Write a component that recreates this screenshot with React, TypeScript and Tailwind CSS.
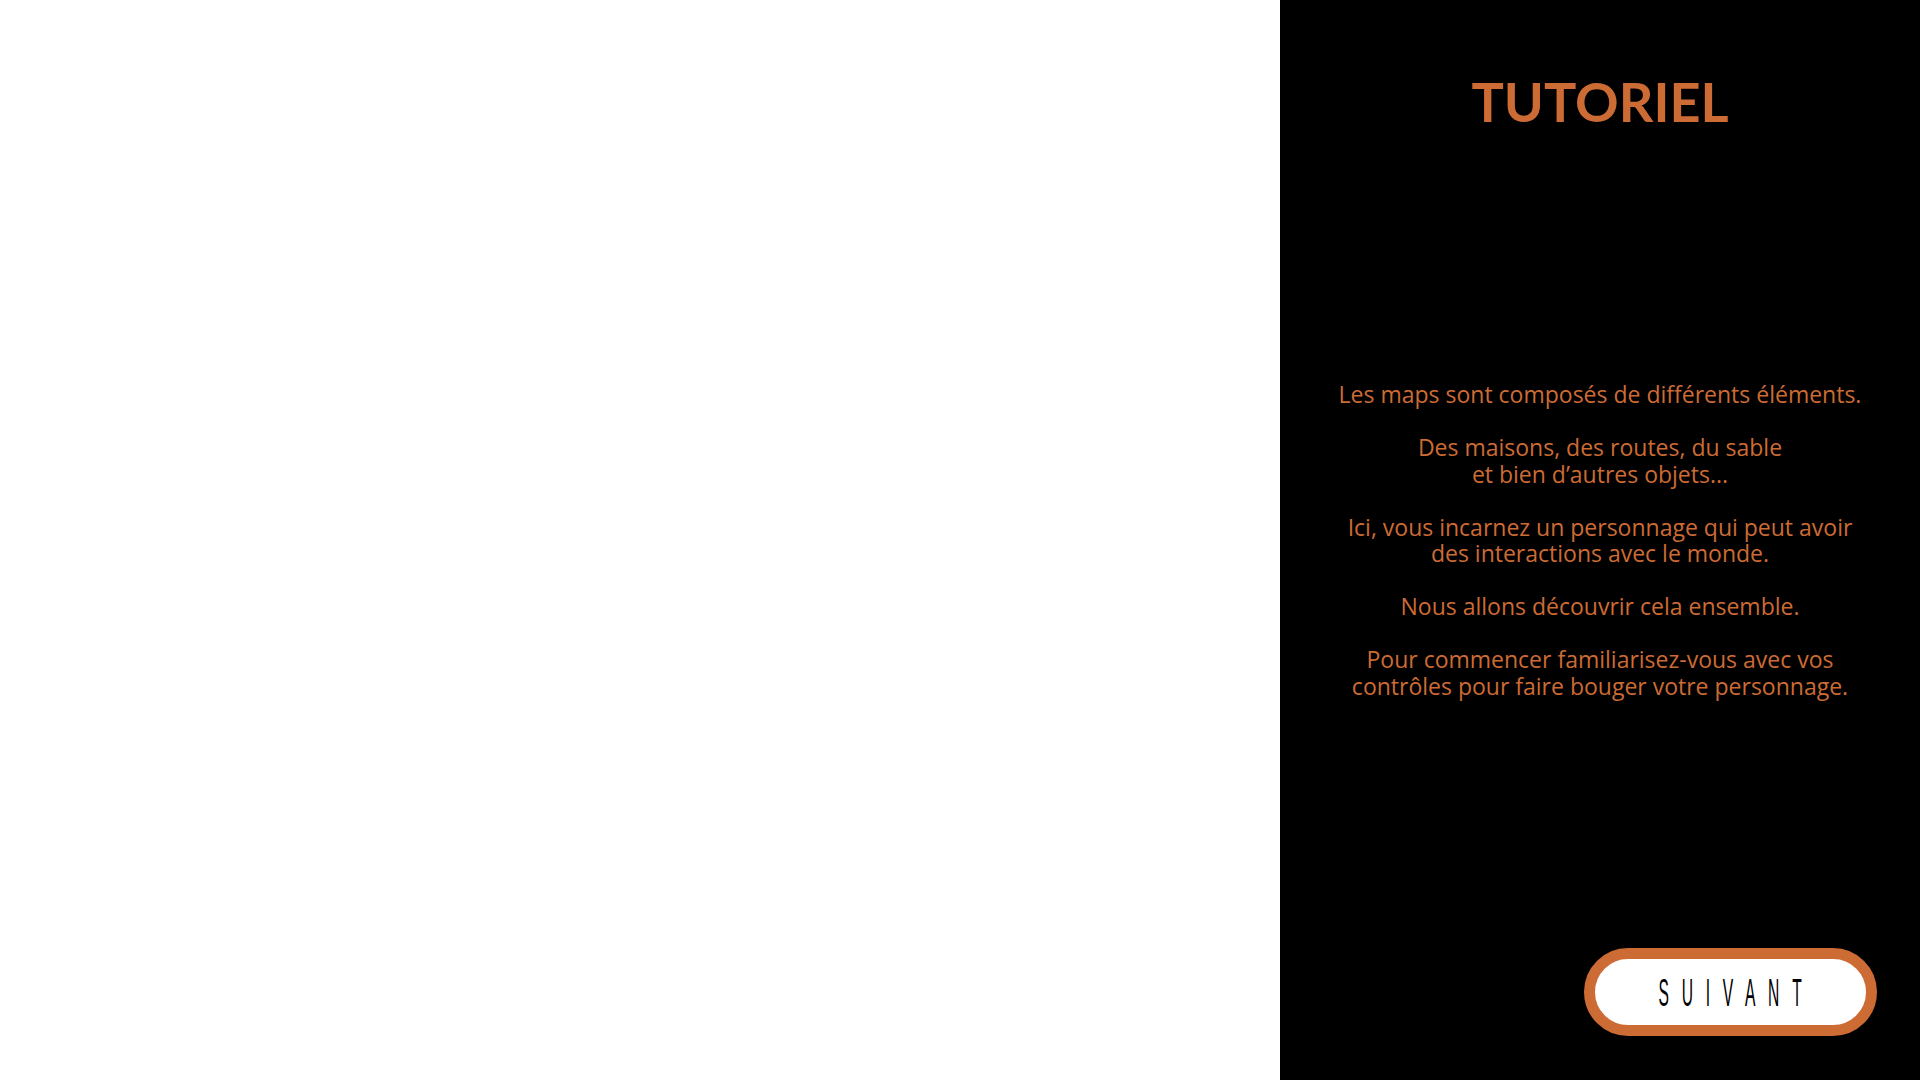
const paragraphs: string[][] = [
  ['Les maps sont composés de différents éléments.'],
  ['Des maisons, des routes, du sable', 'et bien d’autres objets...'],
  ['Ici, vous incarnez un personnage qui peut avoir', 'des interactions avec le monde.'],
  ['Nous allons découvrir cela ensemble.'],
  ['Pour commencer familiarisez-vous avec vos', 'contrôles pour faire bouger votre personnage.'],
];

const App = () => {
  return (
    <div className="flex h-screen w-screen overflow-hidden bg-white">
      {/* Game canvas (empty) */}
      <main className="flex-1 bg-white" />

      {/* Tutorial side panel */}
      <aside className="flex w-[640px] flex-col items-center bg-black">
        <h1 className="mt-[75px] font-['Lato',sans-serif] text-[54px] font-bold leading-[54px] text-[#cd6b34]">
          TUTORIEL
        </h1>

        <div className="mt-[252px] flex flex-col items-center gap-[26.5px] text-center font-['Open_Sans',sans-serif] text-[23px] leading-[26.5px] text-[#cd6b34]">
          {paragraphs.map((lines, i) => (
            <p key={i} className="whitespace-nowrap">
              {lines.map((line, j) => (
                <span key={j} className="block">
                  {line}
                </span>
              ))}
            </p>
          ))}
        </div>

        <button className="mt-auto mr-[43px] mb-[44px] flex h-[88px] w-[293px] items-center justify-center self-end rounded-full border-[11px] border-[#cd6b34] bg-white">
          <span className="inline-block pl-[32px] scale-x-[0.4] font-['Liberation_Sans',sans-serif] text-[39px] leading-none tracking-[32px] text-black">
            SUIVANT
          </span>
        </button>
      </aside>
    </div>
  );
};

export default App;
